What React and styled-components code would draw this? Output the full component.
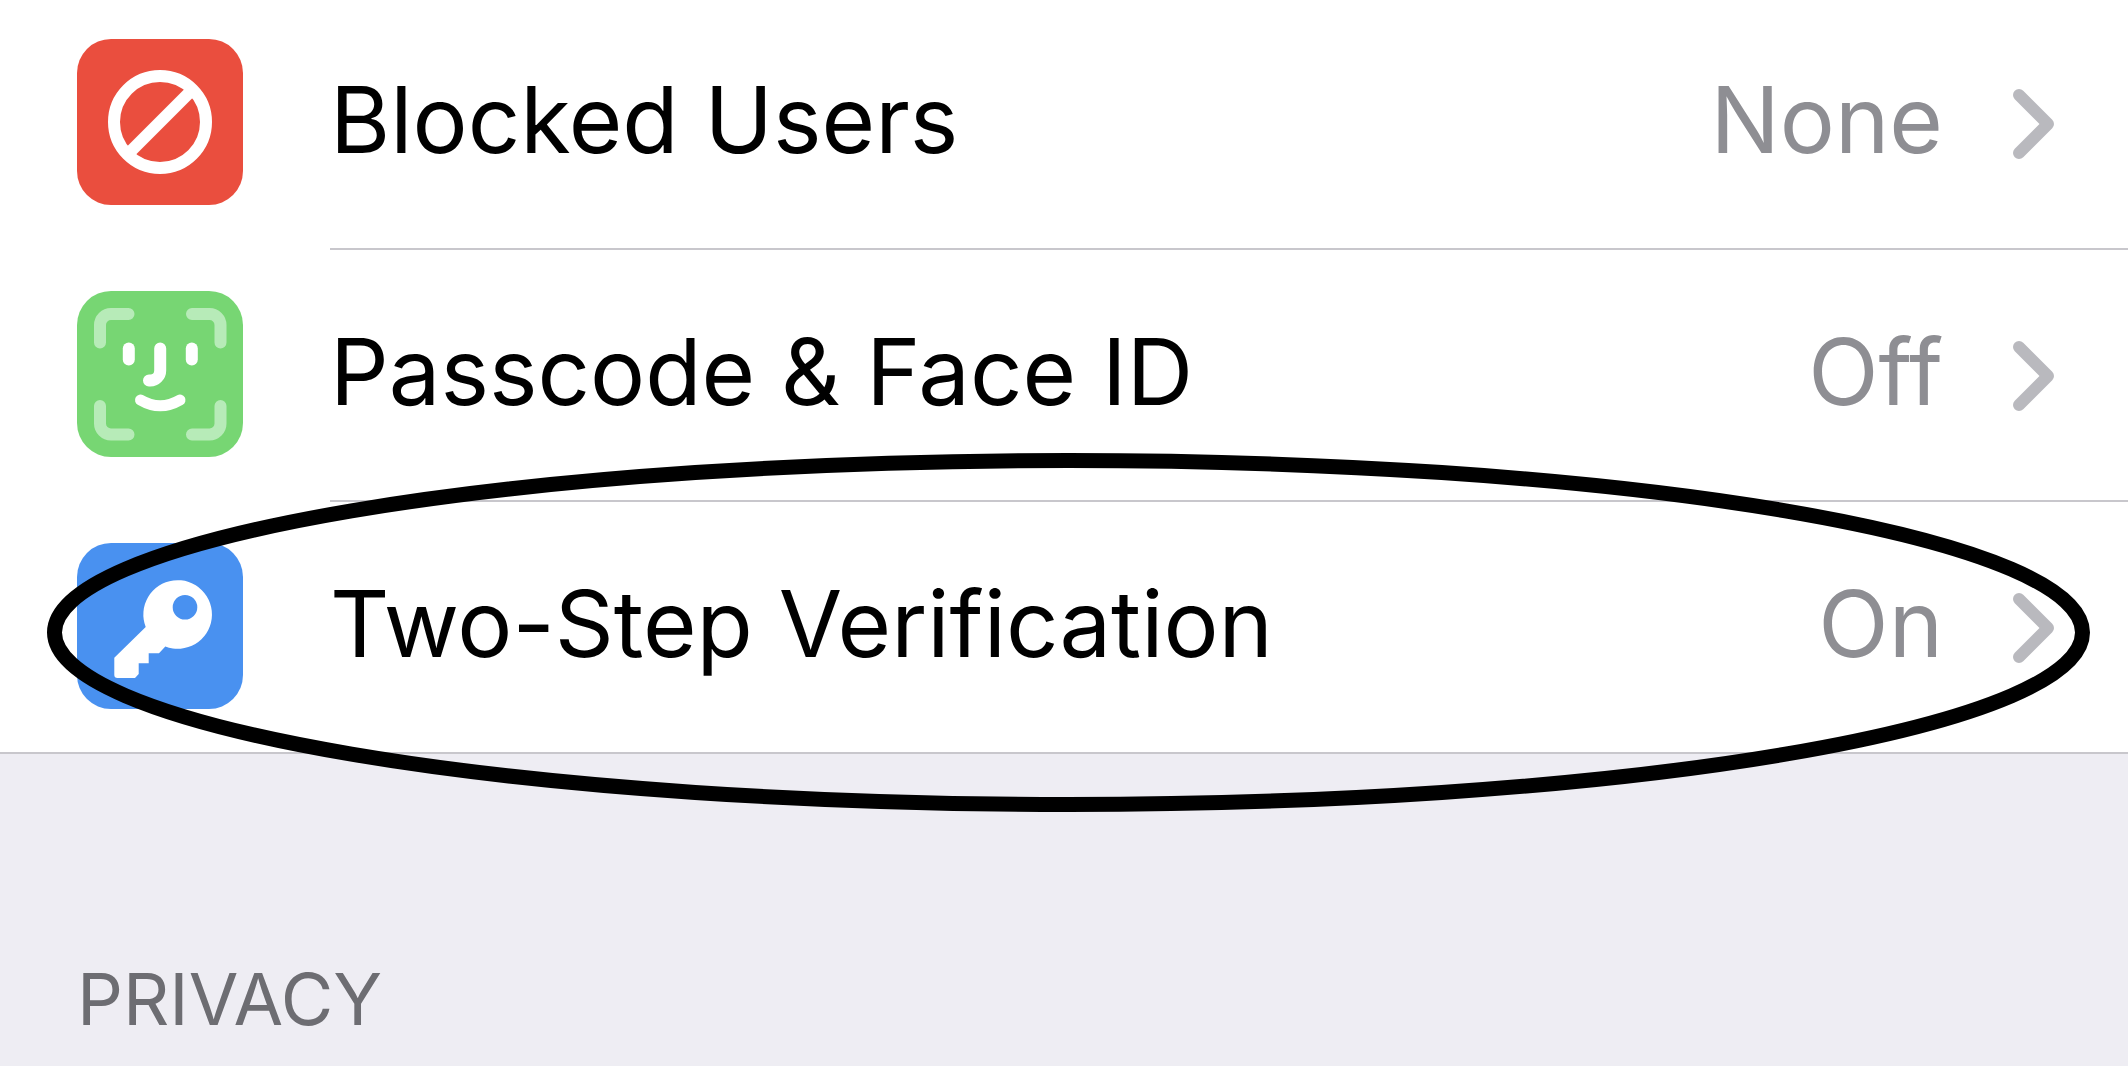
import styled, { createGlobalStyle } from "styled-components"


const rows = [
  { id: 'blocked', label: 'Blocked Users', value: 'None', color: '#ea4e3e', Icon: BlockedIcon },
  { id: 'passcode', label: 'Passcode & Face ID', value: 'Off', color: '#77d673', Icon: FaceIcon },
  { id: 'twostep', label: 'Two-Step Verification', value: 'On', color: '#4991f0', Icon: KeyIcon, circled: true },
];


export default function App() {
  return (
    <>
      <GlobalStyle />
      <Page>
        <List>
          {rows.map(({ id, label, value, color, Icon, circled }) => (
            <Item key={id}>
              <Row type="button">
                <IconTile $color={color}>
                  <Icon />
                </IconTile>
                <RowBody>
                  <Label>{label}</Label>
                  <Value>{value}</Value>
                  <Chevron viewBox="0 0 42 70" aria-hidden="true">
                    <path d="M6 6l29 29L6 64" />
                  </Chevron>
                </RowBody>
              </Row>
              {circled && (
                <Marker viewBox="0 0 2043 359" preserveAspectRatio="none" aria-hidden="true">
                  <ellipse cx="1021.5" cy="179.5" rx="1014" ry="172" />
                </Marker>
              )}
            </Item>
          ))}
        </List>
        <SectionTitle>PRIVACY</SectionTitle>
      </Page>
    </>
  )
}


function BlockedIcon() {
  return (
    <svg viewBox="0 0 166 166" fill="none" stroke="#fff" strokeWidth="12" aria-hidden="true">
      <circle cx="83" cy="83" r="46" />
      <path d="M50.5 115.5l65-65" />
    </svg>
  )
}

function FaceIcon() {
  return (
    <svg viewBox="0 0 166 166" fill="none" stroke="#fff" strokeWidth="12" strokeLinecap="round" aria-hidden="true">
      <g stroke="#b7ebb8">
        <path d="M23 51.5V34A11 11 0 0 1 34 23H51.5" />
        <path d="M115 23H132.5A11 11 0 0 1 143.5 34V51.5" />
        <path d="M143.5 115V132.5A11 11 0 0 1 132.5 143.5H115" />
        <path d="M51.5 143.5H34A11 11 0 0 1 23 132.5V115" />
      </g>
      <path d="M51.8 57.5V68.5" />
      <path d="M114.8 57.5V68.5" />
      <path d="M83.2 57.5V79.5A10 10 0 0 1 73.2 89.5H72" />
      <path d="M63.5 109Q83.2 120.5 103 109" strokeWidth="11" />
    </svg>
  )
}

function KeyIcon() {
  return (
    <svg viewBox="0 0 166 166" fill="#fff" aria-hidden="true">
      <path
        fillRule="evenodd"
        d="M68.7 84A34.3 34.3 0 1 1 88.3 103.5L82 110.3H71.7V120.3H61.7V131L58 135H40.5Q37.3 135 37.3 132V114.7ZM108 52A12.3 12.3 0 1 0 108 76.6A12.3 12.3 0 1 0 108 52Z"
      />
    </svg>
  )
}




const GlobalStyle = createGlobalStyle`
  body{
    margin: 0;
    background-color: #eeedf3;
    font-family: Inter, "Liberation Sans", sans-serif;
  }
`

const Page = styled.main`
  overflow-x: hidden;
`

const List = styled.ul`
  list-style: none;
  margin: 0;
  padding: 0;
  background-color: #fff;
`

const RowBody = styled.span`
  flex: 1;
  display: flex;
  align-items: center;
  padding: 39px 73px 45px 0;
  border-bottom: 2px solid #c8c7cc;
`

const IconTile = styled.span`
  width: 166px;
  height: 166px;
  margin: 41px 87px 0 0;
  border-radius: 34px;
  background-color: ${({ $color }) => $color};

  svg{
    display: block;
    width: 100%;
    height: 100%;
  }
`

const Row = styled.button`
  display: flex;
  align-items: flex-start;
  width: 100%;
  padding: 0 0 0 77px;
  border: none;
  background: none;
  font-family: inherit;
  font-size: 92px;
  line-height: 166px;
  text-align: left;
  cursor: pointer;
`

const Item = styled.li`
  position: relative;

  &:first-child ${RowBody}{
    padding-top: 37px;
  }

  &:first-child ${IconTile}{
    margin-top: 39px;
  }

  &:last-child ${Row}{
    border-bottom: 2px solid #c8c7cc;
  }

  &:last-child ${RowBody}{
    border-bottom: none;
  }
`

const Label = styled.span`
  flex: 1;
  color: #000;
`

const Value = styled.span`
  color: #8e8e93;
`

const Chevron = styled.svg`
  width: 42px;
  height: 70px;
  margin: 8px 0 0 70px;
  fill: none;
  stroke: #b9b9be;
  stroke-width: 12px;
  stroke-linecap: round;
  stroke-linejoin: round;
`

// hand drawn ring that lies over the row
const Marker = styled.svg`
  position: absolute;
  top: -49px;
  left: 47px;
  width: calc(100% - 85px);
  height: 359px;
  fill: none;
  stroke: #000;
  stroke-width: 15px;
  pointer-events: none;
`

const SectionTitle = styled.h2`
  margin: 0;
  padding: 199px 77px 20px;
  color: #6d6d72;
  font-size: 72px;
  font-weight: 400;
  line-height: 92px;
`
